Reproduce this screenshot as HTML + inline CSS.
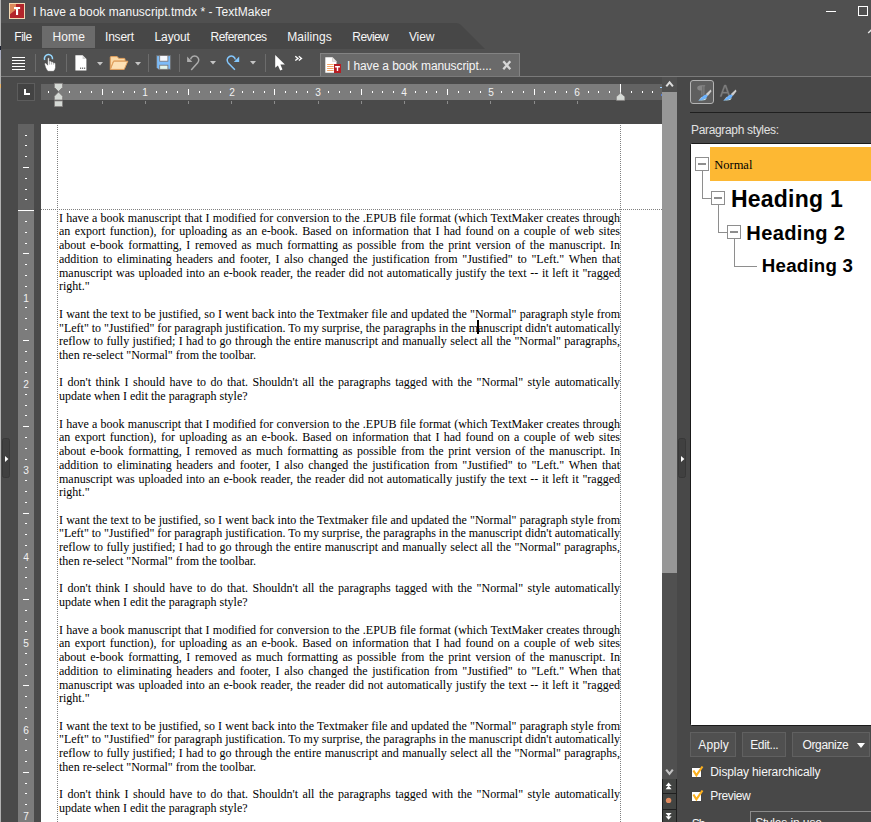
<!DOCTYPE html>
<html><head><meta charset="utf-8"><title>I have a book manuscript.tmdx * - TextMaker</title>
<style>
html,body{margin:0;padding:0;background:#505050;}
body{width:871px;height:822px;overflow:hidden;position:relative;font-family:"Liberation Sans",sans-serif;}
#w{position:absolute;left:0;top:0;width:871px;height:822px;overflow:hidden;background:#505050;}
.a{position:absolute;}
.t{position:absolute;white-space:pre;}
.ui{font-family:"Liberation Sans",sans-serif;font-size:12px;line-height:14px;color:#f6f6f6;}
svg{position:absolute;overflow:visible;}
#txt{position:absolute;left:59px;top:211.7px;width:561px;font-family:"Liberation Serif",serif;font-size:12px;color:#000;}
.ln{position:absolute;left:0;width:561px;height:13.73px;line-height:13.73px;white-space:nowrap;text-align:justify;text-align-last:justify;}
.ln.l{text-align:left;text-align-last:left;}
.sep{position:absolute;top:54px;width:1px;height:18px;background:#6c6c6c;}
.btn{position:absolute;top:732px;height:23px;border:1px solid #606060;background:#505050;}
</style></head><body><div id="w">
<div class="a" style="left:0;top:0;width:1px;height:822px;background:#b2b2b2;z-index:5"></div><div class="a" style="left:0;top:46px;width:1px;height:4px;background:#1c2030;z-index:6"></div><div class="a" style="left:0;top:50px;width:1px;height:9px;background:#a9adc0;z-index:6"></div><div class="a" style="left:0;top:84px;width:1px;height:4px;background:#e9b36a;z-index:6"></div><svg style="left:9px;top:3px" width="16" height="16" viewBox="0 0 16 16">
<rect x="0" y="0" width="16" height="16" fill="#f3d9b4"/>
<rect x="1" y="1" width="14" height="14" fill="#b3252b"/>
<path d="M1 1H7V6.6L1 11.3Z" fill="#de8a5b"/>
<path d="M5 4H11.1V6.1H9.1V12.1H7V6.1H5Z" fill="#fff"/>
</svg><div class="t ui" style="left:33.10px;top:5px;font-family:'Liberation Sans',sans-serif;font-size:12px;letter-spacing:0.019px;">I have a book manuscript.tmdx * - TextMaker</div><div class="a" style="left:826px;top:11px;width:10px;height:1px;background:#fff"></div><div class="a" style="left:858px;top:6px;width:8px;height:8px;border:1px solid #fff"></div><svg style="left:866px;top:28px" width="6" height="6"><path d="M2.2 5L5.5 1.7" stroke="#e8e8e8" stroke-width="1.4" fill="none"/></svg><svg style="left:0;top:0" width="871" height="80"><path d="M1 23H456Q459 23 461 25L485 49H1Z" fill="#474747"/></svg><div class="a" style="left:1px;top:49px;width:870px;height:27px;background:#505050"></div><div class="a" style="left:42px;top:26px;width:53px;height:22px;background:#6b6b6b"></div><div class="t ui" style="left:14.30px;top:30px;font-family:'Liberation Sans',sans-serif;font-size:12px;letter-spacing:-0.477px;">File</div><div class="t ui" style="left:52.50px;top:30px;font-family:'Liberation Sans',sans-serif;font-size:12px;letter-spacing:0.128px;">Home</div><div class="t ui" style="left:105.00px;top:30px;font-family:'Liberation Sans',sans-serif;font-size:12px;letter-spacing:-0.202px;">Insert</div><div class="t ui" style="left:154.60px;top:30px;font-family:'Liberation Sans',sans-serif;font-size:12px;letter-spacing:-0.145px;">Layout</div><div class="t ui" style="left:210.60px;top:30px;font-family:'Liberation Sans',sans-serif;font-size:12px;letter-spacing:-0.541px;">References</div><div class="t ui" style="left:287.20px;top:30px;font-family:'Liberation Sans',sans-serif;font-size:12px;letter-spacing:0.069px;">Mailings</div><div class="t ui" style="left:352.30px;top:30px;font-family:'Liberation Sans',sans-serif;font-size:12px;letter-spacing:-0.577px;">Review</div><div class="t ui" style="left:408.90px;top:30px;font-family:'Liberation Sans',sans-serif;font-size:12px;letter-spacing:-0.108px;">View</div><div class="a" style="left:12px;top:57px;width:13px;height:1px;background:#fff"></div><div class="a" style="left:12px;top:60px;width:13px;height:1px;background:#fff"></div><div class="a" style="left:12px;top:63px;width:13px;height:1px;background:#fff"></div><div class="a" style="left:12px;top:66px;width:13px;height:1px;background:#fff"></div><div class="a" style="left:12px;top:69px;width:13px;height:1px;background:#fff"></div><div class="sep" style="left:35px"></div><div class="sep" style="left:66px"></div><div class="sep" style="left:148px"></div><div class="sep" style="left:179px"></div><div class="sep" style="left:265px"></div><svg style="left:42px;top:52px" width="16" height="21" viewBox="42 52 16 21">
<path d="M44.64 59.94A4.05 4.05 0 1 1 52.44 59.25" fill="none" stroke="#96d8ff" stroke-width="1.55"/>
<path d="M47.7 58.6Q47.7 57.7 48.5 57.7Q49.3 57.7 49.3 58.6V61.3Q49.6 60.9 50.5 61Q51.3 61.1 51.4 62Q52 61.7 52.7 61.9Q53.4 62.1 53.5 62.9Q54.2 62.6 54.9 62.9Q55.5 63.3 55.5 64.2V67.5Q55.4 69.5 53.6 71.3H47.9Q46.5 69.5 45.6 67.6L44.6 64.2Q44.5 62.9 45.4 62.9Q46.5 63 47.7 65.2Z" fill="#fff" stroke="#484848" stroke-width="0.5"/>
<path d="M49.65 61.6V64.6M51.65 62.4V64.6M53.65 63.2V64.6" stroke="#5a5a5a" stroke-width="0.5" fill="none"/>
</svg><svg style="left:75px;top:55px" width="12" height="16" viewBox="0 0 12 16">
<path d="M0.4 0.3H7.6L11.4 4.1V15.6H0.4Z" fill="#fff"/>
<path d="M7.6 0.3V4.1H11.4Z" fill="#cfcfcf"/>
<rect x="5" y="12.6" width="1.2" height="1.2" fill="#555"/><rect x="7" y="12.6" width="1.2" height="1.2" fill="#555"/><rect x="9" y="12.6" width="1.2" height="1.2" fill="#555"/>
</svg><svg style="left:96.5px;top:62px" width="6" height="4"><path d="M0 0H6L3 3.4Z" fill="#c4c4c4"/></svg><svg style="left:134.5px;top:62px" width="6" height="4"><path d="M0 0H6L3 3.4Z" fill="#c4c4c4"/></svg><svg style="left:209.5px;top:61px" width="6" height="4"><path d="M0 0H6L3 3.4Z" fill="#c4c4c4"/></svg><svg style="left:249.5px;top:61px" width="6" height="4"><path d="M0 0H6L3 3.4Z" fill="#c4c4c4"/></svg><svg style="left:109px;top:55px" width="20" height="16" viewBox="109 55 20 16">
<path d="M110.3 69.3V57.3Q110.3 56.6 111 56.6H117.2L118.8 58.4H124.3Q125 58.4 125 59.1V61H113.6L110.3 69.3Z" fill="#fbd9a6" stroke="#e3a05c" stroke-width="1"/>
<path d="M113.7 61.2H127.8L124.2 69.4H110.4Z" fill="#fde0b4" stroke="#e3a05c" stroke-width="1" stroke-linejoin="round"/>
</svg><svg style="left:156px;top:55px" width="16" height="15" viewBox="156 55 16 15">
<path d="M156.6 55.6H170.6V69.3H158.2L156.6 67.7Z" fill="#7dbcf8" stroke="#6e6b69" stroke-width="0.9"/>
<rect x="159.7" y="55.6" width="8.2" height="5.6" fill="#f6f9ff" stroke="#757170" stroke-width="0.8"/>
<rect x="159.7" y="65.2" width="8.2" height="4.1" fill="#e2f5ec" stroke="#757170" stroke-width="0.8"/>
</svg><svg style="left:186px;top:55px" width="15" height="17" viewBox="186 55 15 17">
<path d="M190.6 59.4A4.1 4.1 0 1 1 197.7 62.8L191.2 70" fill="none" stroke="#adadad" stroke-width="1.5"/>
<path d="M187.1 56.5V61.9H192.4Z" fill="#adadad"/>
</svg><svg style="left:226px;top:55px" width="15" height="17" viewBox="226 55 15 17">
<path d="M235.3 59.5A4.1 4.1 0 1 0 228.2 62.9L234.9 69.8" fill="none" stroke="#84c8ff" stroke-width="1.5"/>
<path d="M239.2 56.6V61.9H233.8Z" fill="#84c8ff"/>
</svg><svg style="left:275px;top:55px" width="11" height="17" viewBox="275 55 11 17">
<path d="M275.2 55.1V67.7L277.9 65.4L280.2 70.6L282.5 69.6L280.4 64.6L284.9 64.4Z" fill="#fff"/>
</svg><svg style="left:294px;top:55px" width="9" height="7" viewBox="294 55 9 7">
<path d="M295.3 56.2L298 58.4L295.3 60.6M298.8 56.2L301.5 58.4L298.8 60.6" fill="none" stroke="#fff" stroke-width="1.35"/>
</svg><div class="a" style="left:320px;top:53px;width:198px;height:23px;background:#6a6a6a;border:1px solid #838383;border-bottom:none"></div><svg style="left:325px;top:57px" width="17" height="17" viewBox="0 0 17 17">
<path d="M0.3 0.3H7.5L11.5 4.4V15.7H0.3Z" fill="#fff"/>
<path d="M7.5 0.3V4.4H11.5Z" fill="#ebe9e6" stroke="#c4c1bd" stroke-width="0.6"/>
<g stroke="#f4a566" stroke-width="1"><path d="M2.1 7.5H8.6M2.1 9.5H8.6M2.1 11.5H8.6M2.1 13.5H8.6"/></g>
<rect x="9" y="7" width="7" height="9" fill="#b81d23"/>
<path d="M10.1 9H14.9V10.4H13.2V14H11.8V10.4H10.1Z" fill="#fff"/>
</svg><div class="t ui" style="left:347.00px;top:59px;font-family:'Liberation Sans',sans-serif;font-size:12px;letter-spacing:-0.100px;">I have a book manuscript....</div><svg style="left:502px;top:61px" width="10" height="9" viewBox="0 0 10 9">
<path d="M1.3 0.2L8.3 8.2M8.3 0.2L1.3 8.2" fill="none" stroke="#d6d6d6" stroke-width="2.3"/>
</svg><div class="a" style="left:1px;top:76px;width:870px;height:1px;background:#7a7a7a"></div><div class="a" style="left:1px;top:77px;width:676px;height:745px;background:#4a4a4a"></div><div class="a" style="left:17px;top:83px;width:16px;height:16px;border:1px solid #5d5d5d;background:#434343"></div><div class="a" style="left:24px;top:89px;width:2px;height:6px;background:#fff"></div><div class="a" style="left:24px;top:93px;width:6px;height:2px;background:#fff"></div><div class="a" style="left:41px;top:84px;width:621px;height:16px;background:#636363"></div><div class="a" style="left:58px;top:84px;width:562px;height:16px;background:#7c7c7c"></div><svg style="left:0;top:0" width="871" height="110" shape-rendering="crispEdges"><rect x="48" y="91" width="1" height="2" fill="#fff"/><rect x="69" y="91" width="1" height="2" fill="#fff"/><rect x="80" y="91" width="1" height="2" fill="#fff"/><rect x="91" y="91" width="1" height="2" fill="#fff"/><rect x="102" y="89" width="1" height="6" fill="#fff"/><rect x="102" y="101" width="1" height="3" fill="#8c8c8c"/><rect x="112" y="91" width="1" height="2" fill="#fff"/><rect x="123" y="91" width="1" height="2" fill="#fff"/><rect x="134" y="91" width="1" height="2" fill="#fff"/><rect x="145" y="101" width="1" height="3" fill="#8c8c8c"/><rect x="156" y="91" width="1" height="2" fill="#fff"/><rect x="166" y="91" width="1" height="2" fill="#fff"/><rect x="177" y="91" width="1" height="2" fill="#fff"/><rect x="188" y="89" width="1" height="6" fill="#fff"/><rect x="188" y="101" width="1" height="3" fill="#8c8c8c"/><rect x="199" y="91" width="1" height="2" fill="#fff"/><rect x="210" y="91" width="1" height="2" fill="#fff"/><rect x="220" y="91" width="1" height="2" fill="#fff"/><rect x="231" y="101" width="1" height="3" fill="#8c8c8c"/><rect x="242" y="91" width="1" height="2" fill="#fff"/><rect x="253" y="91" width="1" height="2" fill="#fff"/><rect x="264" y="91" width="1" height="2" fill="#fff"/><rect x="274" y="89" width="1" height="6" fill="#fff"/><rect x="274" y="101" width="1" height="3" fill="#8c8c8c"/><rect x="285" y="91" width="1" height="2" fill="#fff"/><rect x="296" y="91" width="1" height="2" fill="#fff"/><rect x="307" y="91" width="1" height="2" fill="#fff"/><rect x="318" y="101" width="1" height="3" fill="#8c8c8c"/><rect x="328" y="91" width="1" height="2" fill="#fff"/><rect x="339" y="91" width="1" height="2" fill="#fff"/><rect x="350" y="91" width="1" height="2" fill="#fff"/><rect x="361" y="89" width="1" height="6" fill="#fff"/><rect x="361" y="101" width="1" height="3" fill="#8c8c8c"/><rect x="372" y="91" width="1" height="2" fill="#fff"/><rect x="382" y="91" width="1" height="2" fill="#fff"/><rect x="393" y="91" width="1" height="2" fill="#fff"/><rect x="404" y="101" width="1" height="3" fill="#8c8c8c"/><rect x="415" y="91" width="1" height="2" fill="#fff"/><rect x="426" y="91" width="1" height="2" fill="#fff"/><rect x="436" y="91" width="1" height="2" fill="#fff"/><rect x="447" y="89" width="1" height="6" fill="#fff"/><rect x="447" y="101" width="1" height="3" fill="#8c8c8c"/><rect x="458" y="91" width="1" height="2" fill="#fff"/><rect x="469" y="91" width="1" height="2" fill="#fff"/><rect x="480" y="91" width="1" height="2" fill="#fff"/><rect x="490" y="101" width="1" height="3" fill="#8c8c8c"/><rect x="501" y="91" width="1" height="2" fill="#fff"/><rect x="512" y="91" width="1" height="2" fill="#fff"/><rect x="523" y="91" width="1" height="2" fill="#fff"/><rect x="534" y="89" width="1" height="6" fill="#fff"/><rect x="534" y="101" width="1" height="3" fill="#8c8c8c"/><rect x="544" y="91" width="1" height="2" fill="#fff"/><rect x="555" y="91" width="1" height="2" fill="#fff"/><rect x="566" y="91" width="1" height="2" fill="#fff"/><rect x="577" y="101" width="1" height="3" fill="#8c8c8c"/><rect x="588" y="91" width="1" height="2" fill="#fff"/><rect x="598" y="91" width="1" height="2" fill="#fff"/><rect x="609" y="91" width="1" height="2" fill="#fff"/><rect x="620" y="89" width="1" height="6" fill="#fff"/><rect x="631" y="91" width="1" height="2" fill="#fff"/><rect x="642" y="91" width="1" height="2" fill="#fff"/><rect x="652" y="91" width="1" height="2" fill="#fff"/><rect x="620" y="84" width="1" height="10" fill="#fff"/></svg><div class="t" style="left:135.2px;top:84px;width:20px;text-align:center;font-size:11.5px;line-height:16px;color:#f2f2f2;transform:scaleX(.88)">1</div><div class="t" style="left:221.6px;top:84px;width:20px;text-align:center;font-size:11.5px;line-height:16px;color:#f2f2f2;transform:scaleX(.88)">2</div><div class="t" style="left:308.0px;top:84px;width:20px;text-align:center;font-size:11.5px;line-height:16px;color:#f2f2f2;transform:scaleX(.88)">3</div><div class="t" style="left:394.4px;top:84px;width:20px;text-align:center;font-size:11.5px;line-height:16px;color:#f2f2f2;transform:scaleX(.88)">4</div><div class="t" style="left:480.8px;top:84px;width:20px;text-align:center;font-size:11.5px;line-height:16px;color:#f2f2f2;transform:scaleX(.88)">5</div><div class="t" style="left:567.2px;top:84px;width:20px;text-align:center;font-size:11.5px;line-height:16px;color:#f2f2f2;transform:scaleX(.88)">6</div><svg style="left:53px;top:82px" width="12" height="26" viewBox="53 82 12 26">
<g fill="#d5d9d5" stroke="#767171" stroke-width="0.7" stroke-linejoin="miter">
<path d="M54.35 83.35H62.65V87.3L58.5 91.5L54.35 87.3Z"/>
<path d="M58.5 92L62.65 96.2V100H54.35V96.2Z"/>
<rect x="54.35" y="100.9" width="8.3" height="5.8"/>
</g></svg><svg style="left:616px;top:90px" width="10" height="11" viewBox="616 90 10 11">
<path d="M616.4 100.4V96.7L620.6 92.9L624.8 96.7V100.4Z" fill="#d5d9d5" stroke="#767171" stroke-width="0.5"/>
</svg><div class="a" style="left:660px;top:87px;width:2px;height:1px;background:#9ccfff"></div><div class="a" style="left:661px;top:94px;width:1px;height:2px;background:#5a7fd6"></div><div class="a" style="left:18px;top:124px;width:16px;height:698px;background:#7c7c7c"></div><div class="a" style="left:18px;top:124px;width:16px;height:86px;background:#626262"></div><div class="a" style="left:18px;top:210px;width:16px;height:1px;background:#fff"></div><svg style="left:0;top:0" width="40" height="822" shape-rendering="crispEdges"><rect x="25" y="135" width="2" height="1" fill="#fff"/><rect x="25" y="145" width="2" height="1" fill="#fff"/><rect x="25" y="156" width="2" height="1" fill="#fff"/><rect x="23" y="167" width="6" height="1" fill="#fff"/><rect x="25" y="178" width="2" height="1" fill="#fff"/><rect x="25" y="189" width="2" height="1" fill="#fff"/><rect x="25" y="199" width="2" height="1" fill="#fff"/><rect x="25" y="221" width="2" height="1" fill="#fff"/><rect x="25" y="232" width="2" height="1" fill="#fff"/><rect x="25" y="243" width="2" height="1" fill="#fff"/><rect x="23" y="253" width="6" height="1" fill="#fff"/><rect x="25" y="264" width="2" height="1" fill="#fff"/><rect x="25" y="275" width="2" height="1" fill="#fff"/><rect x="25" y="286" width="2" height="1" fill="#fff"/><rect x="25" y="307" width="2" height="1" fill="#fff"/><rect x="25" y="318" width="2" height="1" fill="#fff"/><rect x="25" y="329" width="2" height="1" fill="#fff"/><rect x="23" y="340" width="6" height="1" fill="#fff"/><rect x="25" y="351" width="2" height="1" fill="#fff"/><rect x="25" y="361" width="2" height="1" fill="#fff"/><rect x="25" y="372" width="2" height="1" fill="#fff"/><rect x="25" y="394" width="2" height="1" fill="#fff"/><rect x="25" y="405" width="2" height="1" fill="#fff"/><rect x="25" y="415" width="2" height="1" fill="#fff"/><rect x="23" y="426" width="6" height="1" fill="#fff"/><rect x="25" y="437" width="2" height="1" fill="#fff"/><rect x="25" y="448" width="2" height="1" fill="#fff"/><rect x="25" y="459" width="2" height="1" fill="#fff"/><rect x="25" y="480" width="2" height="1" fill="#fff"/><rect x="25" y="491" width="2" height="1" fill="#fff"/><rect x="25" y="502" width="2" height="1" fill="#fff"/><rect x="23" y="513" width="6" height="1" fill="#fff"/><rect x="25" y="523" width="2" height="1" fill="#fff"/><rect x="25" y="534" width="2" height="1" fill="#fff"/><rect x="25" y="545" width="2" height="1" fill="#fff"/><rect x="25" y="567" width="2" height="1" fill="#fff"/><rect x="25" y="577" width="2" height="1" fill="#fff"/><rect x="25" y="588" width="2" height="1" fill="#fff"/><rect x="23" y="599" width="6" height="1" fill="#fff"/><rect x="25" y="610" width="2" height="1" fill="#fff"/><rect x="25" y="621" width="2" height="1" fill="#fff"/><rect x="25" y="631" width="2" height="1" fill="#fff"/><rect x="25" y="653" width="2" height="1" fill="#fff"/><rect x="25" y="664" width="2" height="1" fill="#fff"/><rect x="25" y="675" width="2" height="1" fill="#fff"/><rect x="23" y="685" width="6" height="1" fill="#fff"/><rect x="25" y="696" width="2" height="1" fill="#fff"/><rect x="25" y="707" width="2" height="1" fill="#fff"/><rect x="25" y="718" width="2" height="1" fill="#fff"/><rect x="25" y="739" width="2" height="1" fill="#fff"/><rect x="25" y="750" width="2" height="1" fill="#fff"/><rect x="25" y="761" width="2" height="1" fill="#fff"/><rect x="23" y="772" width="6" height="1" fill="#fff"/><rect x="25" y="783" width="2" height="1" fill="#fff"/><rect x="25" y="793" width="2" height="1" fill="#fff"/><rect x="25" y="804" width="2" height="1" fill="#fff"/></svg><div class="t" style="left:16px;top:289.6px;width:20px;text-align:center;font-size:11.5px;line-height:16px;color:#f2f2f2;transform:scaleX(.88)">1</div><div class="t" style="left:16px;top:376.0px;width:20px;text-align:center;font-size:11.5px;line-height:16px;color:#f2f2f2;transform:scaleX(.88)">2</div><div class="t" style="left:16px;top:462.4px;width:20px;text-align:center;font-size:11.5px;line-height:16px;color:#f2f2f2;transform:scaleX(.88)">3</div><div class="t" style="left:16px;top:548.8px;width:20px;text-align:center;font-size:11.5px;line-height:16px;color:#f2f2f2;transform:scaleX(.88)">4</div><div class="t" style="left:16px;top:635.2px;width:20px;text-align:center;font-size:11.5px;line-height:16px;color:#f2f2f2;transform:scaleX(.88)">5</div><div class="t" style="left:16px;top:721.6px;width:20px;text-align:center;font-size:11.5px;line-height:16px;color:#f2f2f2;transform:scaleX(.88)">6</div><div class="t" style="left:16px;top:808.0px;width:20px;text-align:center;font-size:11.5px;line-height:16px;color:#f2f2f2;transform:scaleX(.88)">7</div><div class="a" style="left:41px;top:124px;width:621px;height:698px;background:#fff"></div><div class="a" style="left:57px;top:125px;width:1px;height:697px;background:repeating-linear-gradient(to bottom,#808080 0 1px,transparent 1px 2px)"></div><div class="a" style="left:620px;top:125px;width:1px;height:697px;background:repeating-linear-gradient(to bottom,#808080 0 1px,transparent 1px 2px)"></div><div class="a" style="left:41px;top:209px;width:621px;height:1px;background:repeating-linear-gradient(to right,#808080 0 1px,transparent 1px 2px)"></div><div id="txt"><div class="ln" style="top:0.00px">I have a book manuscript that I modified for conversion to the .EPUB file format (which TextMaker creates through</div><div class="ln" style="top:13.73px">an export function), for uploading as an e-book. Based on information that I had found on a couple of web sites</div><div class="ln" style="top:27.46px">about e-book formatting, I removed as much formatting as possible from the print version of the manuscript. In</div><div class="ln" style="top:41.19px">addition to eliminating headers and footer, I also changed the justification from &quot;Justified&quot; to &quot;Left.&quot; When that</div><div class="ln" style="top:54.92px">manuscript was uploaded into an e-book reader, the reader did not automatically justify the text -- it left it &quot;ragged</div><div class="ln l" style="top:68.65px">right.&quot;</div><div class="ln" style="top:96.11px">I want the text to be justified, so I went back into the Textmaker file and updated the &quot;Normal&quot; paragraph style from</div><div class="ln" style="top:109.84px;word-spacing:-0.107px">&quot;Left&quot; to &quot;Justified&quot; for paragraph justification. To my surprise, the paragraphs in the manuscript didn't automatically</div><div class="ln" style="top:123.57px">reflow to fully justified; I had to go through the entire manuscript and manually select all the &quot;Normal&quot; paragraphs,</div><div class="ln l" style="top:137.30px">then re-select &quot;Normal&quot; from the toolbar.</div><div class="ln" style="top:164.76px">I don't think I should have to do that. Shouldn't all the paragraphs tagged with the &quot;Normal&quot; style automatically</div><div class="ln l" style="top:178.49px">update when I edit the paragraph style?</div><div class="ln" style="top:205.95px">I have a book manuscript that I modified for conversion to the .EPUB file format (which TextMaker creates through</div><div class="ln" style="top:219.68px">an export function), for uploading as an e-book. Based on information that I had found on a couple of web sites</div><div class="ln" style="top:233.41px">about e-book formatting, I removed as much formatting as possible from the print version of the manuscript. In</div><div class="ln" style="top:247.14px">addition to eliminating headers and footer, I also changed the justification from &quot;Justified&quot; to &quot;Left.&quot; When that</div><div class="ln" style="top:260.87px">manuscript was uploaded into an e-book reader, the reader did not automatically justify the text -- it left it &quot;ragged</div><div class="ln l" style="top:274.60px">right.&quot;</div><div class="ln" style="top:302.06px">I want the text to be justified, so I went back into the Textmaker file and updated the &quot;Normal&quot; paragraph style from</div><div class="ln" style="top:315.79px;word-spacing:-0.107px">&quot;Left&quot; to &quot;Justified&quot; for paragraph justification. To my surprise, the paragraphs in the manuscript didn't automatically</div><div class="ln" style="top:329.52px">reflow to fully justified; I had to go through the entire manuscript and manually select all the &quot;Normal&quot; paragraphs,</div><div class="ln l" style="top:343.25px">then re-select &quot;Normal&quot; from the toolbar.</div><div class="ln" style="top:370.71px">I don't think I should have to do that. Shouldn't all the paragraphs tagged with the &quot;Normal&quot; style automatically</div><div class="ln l" style="top:384.44px">update when I edit the paragraph style?</div><div class="ln" style="top:411.90px">I have a book manuscript that I modified for conversion to the .EPUB file format (which TextMaker creates through</div><div class="ln" style="top:425.63px">an export function), for uploading as an e-book. Based on information that I had found on a couple of web sites</div><div class="ln" style="top:439.36px">about e-book formatting, I removed as much formatting as possible from the print version of the manuscript. In</div><div class="ln" style="top:453.09px">addition to eliminating headers and footer, I also changed the justification from &quot;Justified&quot; to &quot;Left.&quot; When that</div><div class="ln" style="top:466.82px">manuscript was uploaded into an e-book reader, the reader did not automatically justify the text -- it left it &quot;ragged</div><div class="ln l" style="top:480.55px">right.&quot;</div><div class="ln" style="top:508.01px">I want the text to be justified, so I went back into the Textmaker file and updated the &quot;Normal&quot; paragraph style from</div><div class="ln" style="top:521.74px;word-spacing:-0.107px">&quot;Left&quot; to &quot;Justified&quot; for paragraph justification. To my surprise, the paragraphs in the manuscript didn't automatically</div><div class="ln" style="top:535.47px">reflow to fully justified; I had to go through the entire manuscript and manually select all the &quot;Normal&quot; paragraphs,</div><div class="ln l" style="top:549.20px">then re-select &quot;Normal&quot; from the toolbar.</div><div class="ln" style="top:576.66px">I don't think I should have to do that. Shouldn't all the paragraphs tagged with the &quot;Normal&quot; style automatically</div><div class="ln l" style="top:590.39px">update when I edit the paragraph style?</div></div><div class="a" style="left:477px;top:320px;width:2px;height:14px;background:#000"></div><div class="a" style="left:2px;top:438px;width:6px;height:38px;border:1px solid #383838;border-radius:2.5px;background:#404040"></div><svg style="left:4.6px;top:455.5px" width="4" height="6"><path d="M0 0L3.4 3L0 6Z" fill="#fff"/></svg><div class="a" style="left:662px;top:77px;width:15px;height:745px;background:#505050"></div><div class="a" style="left:662px;top:92px;width:15px;height:481px;background:#979797"></div><svg style="left:665px;top:80px" width="10" height="8" viewBox="665 80 10 8"><path d="M666.3 86.4L669.6 82.4L672.9 86.4" fill="none" stroke="#dcdcdc" stroke-width="2"/></svg><svg style="left:665px;top:768px" width="10" height="8" viewBox="665 768 10 8"><path d="M666.2 769.6L669.5 773.8L672.8 769.6" fill="none" stroke="#c2c2c2" stroke-width="2.1"/></svg><div class="a" style="left:662px;top:779px;width:15px;height:43px;background:#1f1f1f"></div><div class="a" style="left:663px;top:779px;width:13px;height:14px;background:#424442"></div><div class="a" style="left:663px;top:794px;width:13px;height:15px;background:#424442"></div><div class="a" style="left:663px;top:810px;width:13px;height:12px;background:#424442"></div><svg style="left:662px;top:779px" width="15" height="43" viewBox="662 779 15 43">
<path d="M668.6 782.4L671.6 786H665.6ZM668.6 785.6L671.6 789.2H665.6Z" fill="#fff"/>
<circle cx="668.6" cy="800.4" r="2.7" fill="#e08b5f"/>
<path d="M665.6 813H671.6L668.6 816.6ZM665.6 816.2H671.6L668.6 819.8Z" fill="#fff"/>
</svg><div class="a" style="left:677px;top:77px;width:194px;height:745px;background:#484848"></div><div class="a" style="left:678px;top:438px;width:6px;height:38px;border:1px solid #383838;border-radius:2.5px;background:#404040"></div><svg style="left:680.6px;top:455.5px" width="4" height="6"><path d="M0 0L3.4 3L0 6Z" fill="#fff"/></svg><div class="a" style="left:690px;top:80px;width:22px;height:22px;border:1px solid #b4b4b4;border-radius:3px;background:#5f5f5f"></div><svg style="left:690px;top:80px" width="60" height="25" viewBox="690 80 60 25"><path d="M701.6 85.2H705.2V86.2H704.4V95.6H703.4V86.2H702.4V95.6H701.4V90.6Q697.2 90.6 697.2 87.9Q697.2 85.2 701.6 85.2Z" fill="#868686"/><g transform="translate(0 0)"><path d="M710.7 89.4L711.5 91.2L707.8 95.9L705.7 94.2Z" fill="#cdcdcd"/><path d="M706.2 94.4L707.8 95.7Q706.5 98.6 703.6 99.5L698.2 100.8Q700.6 98.6 702.2 96.8Q704 94.9 706.2 94.4Z" fill="#6db3ff"/><path d="M698.2 100.8L703.6 99.5Q705.4 98.9 706.6 97.6L706.2 98.9Q705.2 100 703.6 100.3Z" fill="#c8f2ff"/><path d="M698.2 100.8Q700.6 98.6 702.2 96.8L701.4 96.9Q699.8 98.9 698.2 100.8Z" fill="#e6fbff"/></g><path d="M724.3 85H726L730.2 96.4H728.7L727.6 93.3H722.6L721.5 96.4H720.1ZM723 92.1H727.2L725.1 86.3Z" fill="#7e7e7e" stroke="#7e7e7e" stroke-width="0.45"/><g transform="translate(25 0)"><path d="M710.7 89.4L711.5 91.2L707.8 95.9L705.7 94.2Z" fill="#cdcdcd"/><path d="M706.2 94.4L707.8 95.7Q706.5 98.6 703.6 99.5L698.2 100.8Q700.6 98.6 702.2 96.8Q704 94.9 706.2 94.4Z" fill="#6db3ff"/><path d="M698.2 100.8L703.6 99.5Q705.4 98.9 706.6 97.6L706.2 98.9Q705.2 100 703.6 100.3Z" fill="#c8f2ff"/><path d="M698.2 100.8Q700.6 98.6 702.2 96.8L701.4 96.9Q699.8 98.9 698.2 100.8Z" fill="#e6fbff"/></g></svg><div class="a" style="left:690px;top:112px;width:181px;height:1px;background:#1f1f1f"></div><div class="t ui" style="left:691.00px;top:123px;font-family:'Liberation Sans',sans-serif;font-size:12px;letter-spacing:-0.337px;color:#e2e2e2;">Paragraph styles:</div><div class="a" style="left:690px;top:143px;width:190px;height:581px;border:1px solid #1a1a1a;border-radius:1.5px;background:#fff"></div><div class="a" style="left:710px;top:147px;width:161px;height:34px;background:#fdb833"></div><div class="a" style="left:702px;top:171px;width:1px;height:28px;background:#8e8e8e"></div><div class="a" style="left:702px;top:198px;width:9px;height:1px;background:#8e8e8e"></div><div class="a" style="left:718px;top:205px;width:1px;height:28px;background:#8e8e8e"></div><div class="a" style="left:718px;top:232px;width:9px;height:1px;background:#8e8e8e"></div><div class="a" style="left:734px;top:239px;width:1px;height:28px;background:#8e8e8e"></div><div class="a" style="left:734px;top:266px;width:23px;height:1px;background:#8e8e8e"></div><div class="a" style="left:695px;top:157px;width:12px;height:12px;border:1px solid #8e8e8e;background:#fff"></div><div class="a" style="left:698px;top:163px;width:8px;height:2px;background:#8e8e8e"></div><div class="a" style="left:711px;top:191px;width:12px;height:12px;border:1px solid #8e8e8e;background:#fff"></div><div class="a" style="left:714px;top:197px;width:8px;height:2px;background:#8e8e8e"></div><div class="a" style="left:727px;top:225px;width:12px;height:12px;border:1px solid #8e8e8e;background:#fff"></div><div class="a" style="left:730px;top:231px;width:8px;height:2px;background:#8e8e8e"></div><div class="t " style="left:714.20px;top:158px;font-family:'Liberation Serif',serif;font-size:12.5px;letter-spacing:0.002px;color:#000;line-height:15px;">Normal</div><div class="t " style="left:730.90px;top:185.0px;font-family:'Liberation Sans',sans-serif;font-size:23px;letter-spacing:0.248px;font-weight:bold;color:#000;line-height:28px;">Heading 1</div><div class="t " style="left:746.30px;top:220.8px;font-family:'Liberation Sans',sans-serif;font-size:20.1px;letter-spacing:0.330px;font-weight:bold;color:#000;line-height:24px;">Heading 2</div><div class="t " style="left:761.80px;top:255.0px;font-family:'Liberation Sans',sans-serif;font-size:18.7px;letter-spacing:0.229px;font-weight:bold;color:#000;line-height:22px;">Heading 3</div><div class="btn" style="left:690px;width:44px"></div><div class="btn" style="left:742px;width:42px"></div><div class="btn" style="left:792px;width:76px"></div><div class="t ui" style="left:698.30px;top:738px;font-family:'Liberation Sans',sans-serif;font-size:12px;letter-spacing:0.097px;">Apply</div><div class="t ui" style="left:750.20px;top:738px;font-family:'Liberation Sans',sans-serif;font-size:12px;letter-spacing:-0.364px;">Edit...</div><div class="t ui" style="left:802.40px;top:738px;font-family:'Liberation Sans',sans-serif;font-size:12px;letter-spacing:-0.328px;">Organize</div><svg style="left:856.5px;top:743px" width="9" height="6"><path d="M0 0H8L4 5Z" fill="#fff"/></svg><div class="a" style="left:691px;top:767px;width:9px;height:9px;border:1px solid #454545;background:#fff"></div><svg style="left:690px;top:764px" width="16" height="14" viewBox="690 764 16 14"><path d="M693.4 770.5L696.4 775.3L702.5 766.5" fill="none" stroke="#fcb01f" stroke-width="2.15"/></svg><div class="a" style="left:691px;top:791px;width:9px;height:9px;border:1px solid #454545;background:#fff"></div><svg style="left:690px;top:788px" width="16" height="14" viewBox="690 764 16 14"><path d="M693.4 770.5L696.4 775.3L702.5 766.5" fill="none" stroke="#fcb01f" stroke-width="2.15"/></svg><div class="t ui" style="left:710.30px;top:764.8px;font-family:'Liberation Sans',sans-serif;font-size:12px;letter-spacing:-0.114px;">Display hierarchically</div><div class="t ui" style="left:710.30px;top:789.2px;font-family:'Liberation Sans',sans-serif;font-size:12px;letter-spacing:-0.387px;">Preview</div><div class="t ui" style="left:691.70px;top:816.6px;font-family:'Liberation Sans',sans-serif;font-size:12px;letter-spacing:-1.000px;">Sh</div><div class="a" style="left:750px;top:811px;width:125px;height:20px;border:1px solid #8c8c8c;background:#484848"></div><div class="t ui" style="left:755.20px;top:815.7px;font-family:'Liberation Sans',sans-serif;font-size:12px;letter-spacing:-0.102px;">Styles in use</div></div></body></html>
